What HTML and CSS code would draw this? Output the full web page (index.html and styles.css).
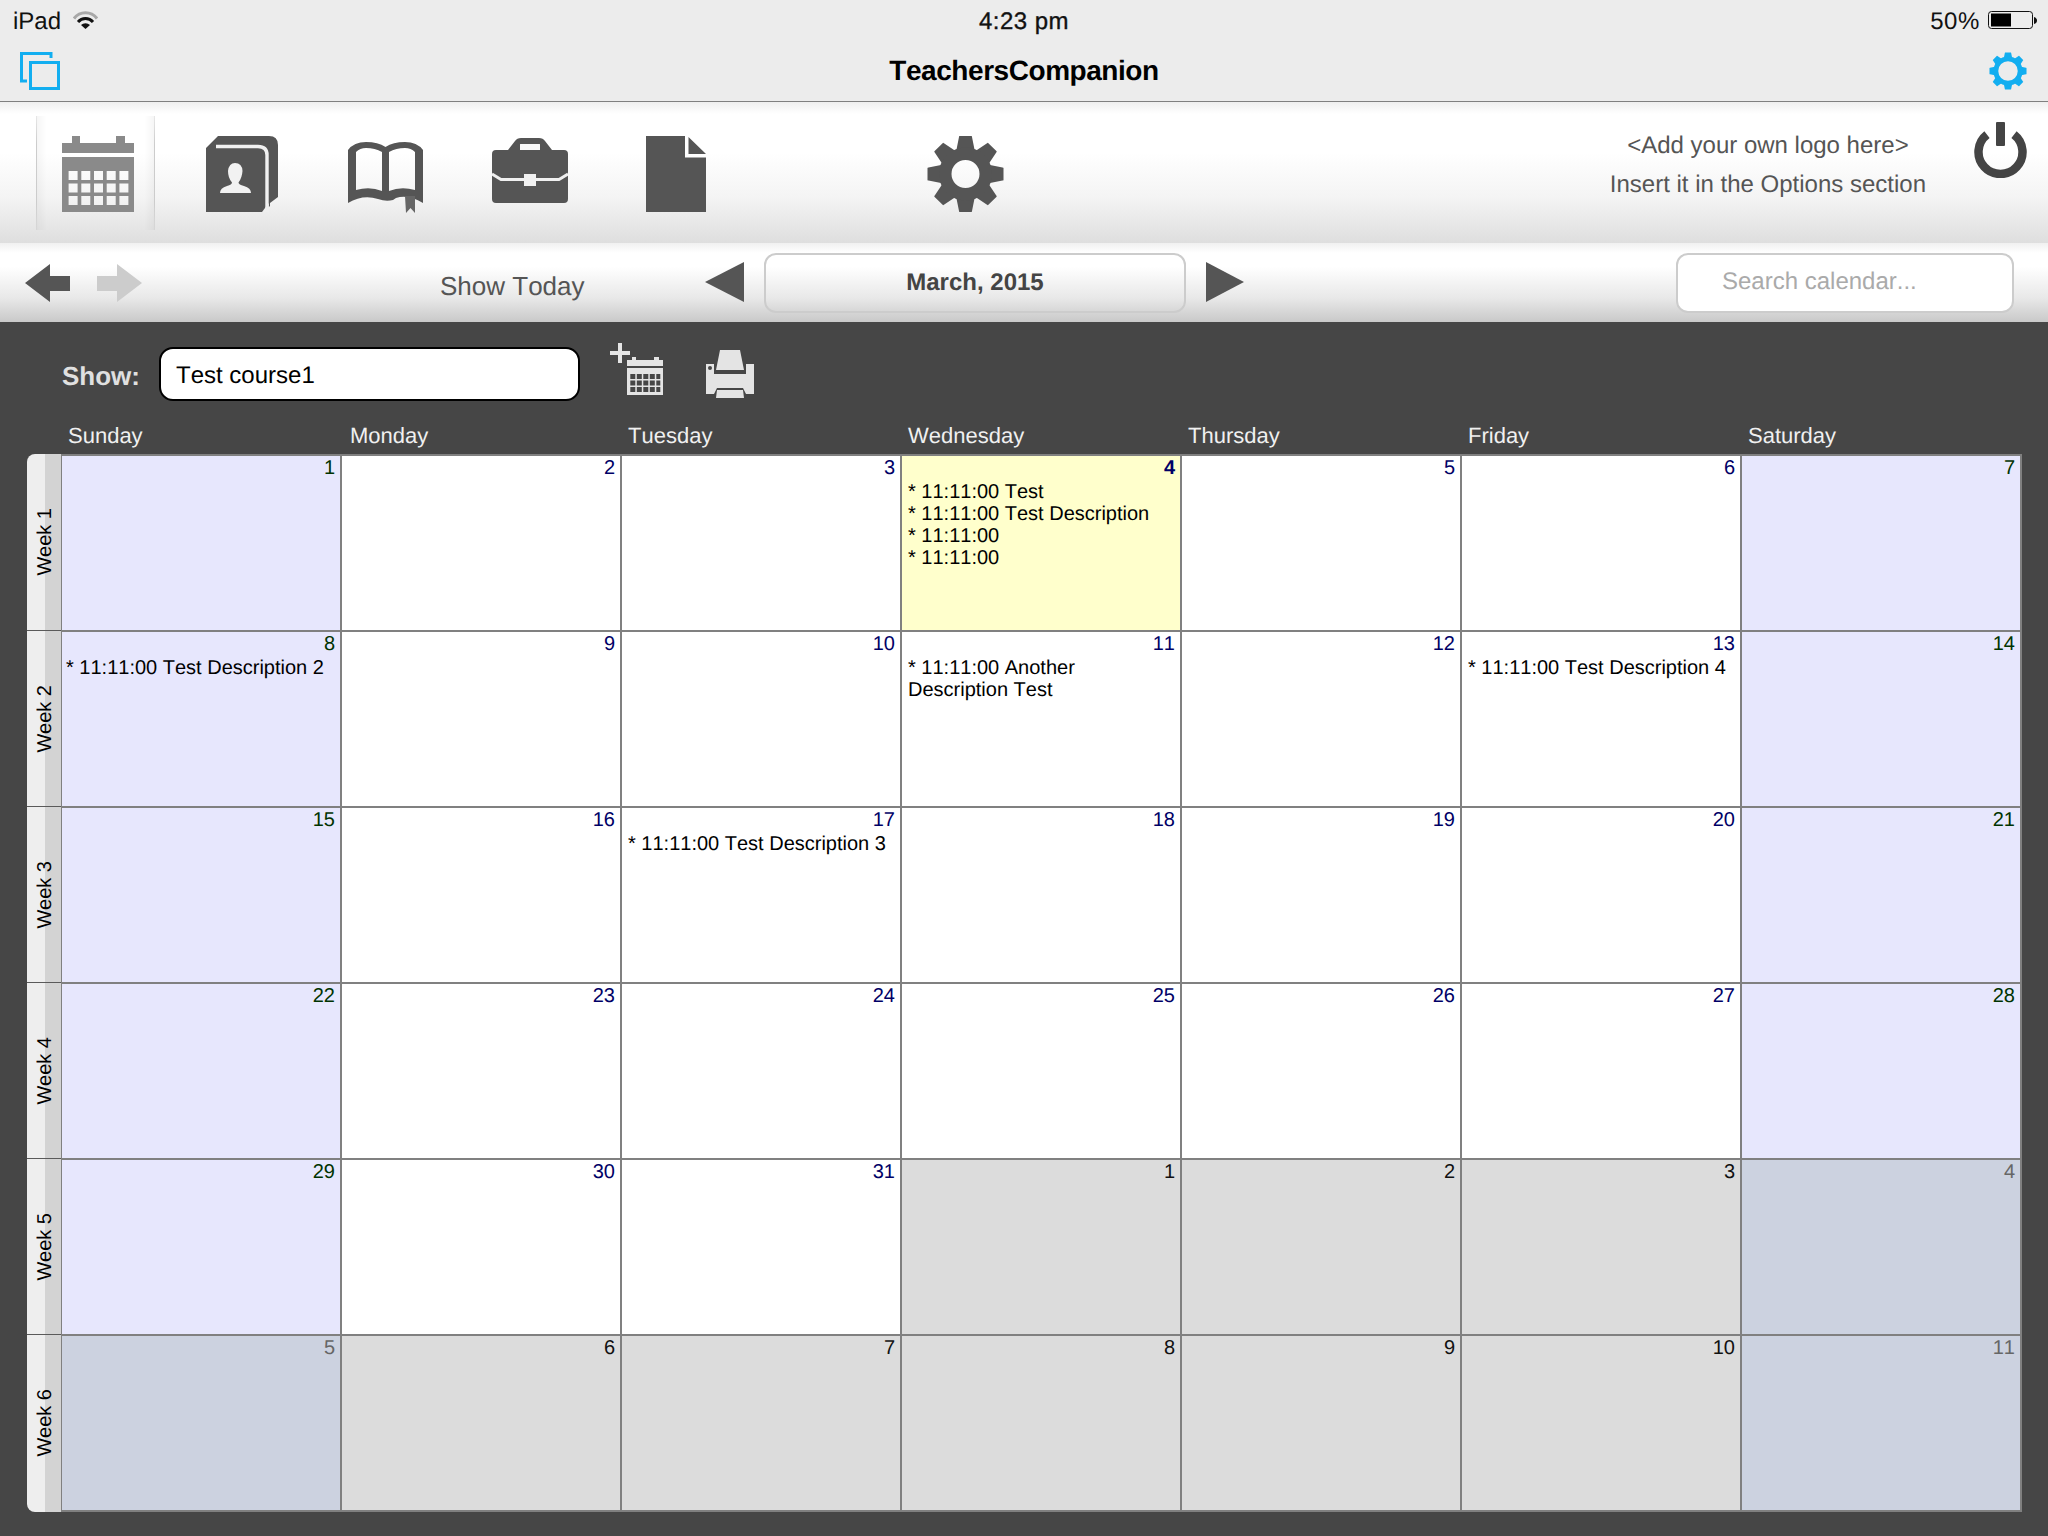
FILE: index.html
```html
<!DOCTYPE html>
<html lang="en">
<head>
<meta charset="utf-8">
<title>TeachersCompanion</title>
<link rel="stylesheet" href="styles.css">
</head>
<body>
<svg class="defs" width="0" height="0">
  <defs>
    <path id="gear-tooth" d="M-6 -38Q-6.500 -38 -6.500 -37L-9.500 -22H9.500L6.500 -37Q6.500 -38 6 -38Z"/>
    <g id="gear-teeth">
      <use href="#gear-tooth"/>
      <use href="#gear-tooth" transform="rotate(45)"/>
      <use href="#gear-tooth" transform="rotate(90)"/>
      <use href="#gear-tooth" transform="rotate(135)"/>
      <use href="#gear-tooth" transform="rotate(180)"/>
      <use href="#gear-tooth" transform="rotate(225)"/>
      <use href="#gear-tooth" transform="rotate(270)"/>
      <use href="#gear-tooth" transform="rotate(315)"/>
    </g>
  </defs>
</svg>
<header class="top">
  <div class="status">
    <div class="status-left">
      <span>iPad</span>
      <svg class="wifi" width="25" height="18" viewBox="0 0 25 18">
        <path d="M1 7.500A14.500 14.500 0 0 1 24 7.500" fill="none" stroke="#a8a8a8" stroke-width="3"/>
        <path d="M5 11A10 10 0 0 1 20 11" fill="none" stroke="#111" stroke-width="3"/>
        <path d="M8 14A6.500 6.500 0 0 1 17 14L12.500 18Z" fill="#111"/>
      </svg>
    </div>
    <div class="clock"><span>4:23 pm</span></div>
    <div class="status-right">
      <span class="pct">50%</span>
      <svg class="battery" width="49" height="18" viewBox="0 0 49 18">
        <rect x="0.500" y="0.500" width="44" height="17" rx="3" fill="none" stroke="#111" stroke-width="1"/>
        <rect x="3" y="2.500" width="20" height="13" fill="#000"/>
        <path d="M46 6Q49 7 49 9.500Q49 12 46 13Z" fill="#111"/>
      </svg>
    </div>
  </div>
  <div class="nav">
    <svg class="nav-copy" width="40" height="38" viewBox="0 0 40 38">
      <path d="M31 6V1.500H1.500V29H7" fill="none" stroke="#12aef0" stroke-width="3"/>
      <rect x="10.500" y="10.500" width="28" height="26" fill="none" stroke="#12aef0" stroke-width="3"/>
    </svg>
    <div class="title">TeachersCompanion</div>
    <svg class="nav-gear" width="38" height="38" viewBox="-39 -39 78 78">
      <use href="#gear-teeth" fill="#12aef0"/>
      <circle r="25" fill="none" stroke="#12aef0" stroke-width="10"/>
    </svg>
  </div>
</header>

<nav class="toolbar">
  <div class="tab">
    <svg width="72" height="76" viewBox="0 0 72 76">
      <path fill="#8a8a8a" fill-rule="evenodd" d="M10 0h8v7h36v-7h9v7h9v10H0V7h10ZM0 21h72v55H0ZM6.600 35v9h9v-9ZM19.300 35v9h9v-9ZM32 35v9h9v-9ZM44.700 35v9h9v-9ZM57.400 35v9h9v-9ZM6.600 47.500v9h9v-9ZM19.300 47.500v9h9v-9ZM32 47.500v9h9v-9ZM44.700 47.500v9h9v-9ZM57.400 47.500v9h9v-9ZM6.600 60v9h9v-9ZM19.300 60v9h9v-9ZM32 60v9h9v-9ZM44.700 60v9h9v-9ZM57.400 60v9h9v-9Z"/>
    </svg>
  </div>
  <svg class="tool tool-contact" width="73" height="76" viewBox="0 0 73 76">
    <path fill="#555" d="M0 12L12 0H63Q72 0 72 9V61L64 67V70L57 76H0Z"/>
    <path d="M10 10.500H52Q61 10.500 61 19V72" fill="none" stroke="#f1f1f1" stroke-width="3.400"/>
    <path d="M62.800 67V76H56Z" fill="#efefef"/>
    <path fill="#f2f2f2" d="M14 57Q14 52 21 50Q26 48.500 26 46.500Q22 42 22 35Q23 27 29 27Q36 27 36.500 35Q36 42 32.500 46.500Q32.500 48.500 38 50Q45 52 45 57Z"/>
  </svg>
  <svg class="tool tool-book" width="75" height="71" viewBox="0 0 75 71">
    <path fill="#555" fill-rule="evenodd" d="M0 8Q6 0 18 0Q30 0 37.500 5Q45 0 57 0Q69 0 75 8V61Q60 52 48 56L45 58Q38 60 30 57Q15 52 0 61ZM8 48Q22 44 34 49V10Q27 6 18 6Q12 6 8 10ZM41 49Q53 44 67 48V10Q63 6 57 6Q48 6 41 10Z"/>
    <path fill="#666" d="M57 54H67V71L62.500 66L58 71Z"/>
  </svg>
  <svg class="tool tool-case" width="76" height="65" viewBox="0 0 76 65">
    <path fill="#555" d="M16 12L23 3Q25 0 29 0H47Q51 0 53 3L60 12H72Q76 12 76 16V61Q76 65 72 65H4Q0 65 0 61V16Q0 12 4 12ZM28 12H48V7Q48 6 47 6H29Q28 6 28 7Z"/>
    <path d="M0 36L9 41.500H67L76 36" fill="none" stroke="#f0f0f0" stroke-width="3"/>
    <rect x="32" y="36" width="12" height="12" fill="#f0f0f0"/>
    <path d="M28 12V7Q28 6 29 6H47Q48 6 48 7V12Z" fill="#f8f8f8"/>
  </svg>
  <svg class="tool tool-file" width="60" height="76" viewBox="0 0 60 76">
    <path fill="#555" d="M0 0H39V21.500H60V76H0ZM42.500 1L60 18H42.500Z"/>
  </svg>
  <svg class="tool tool-gear" width="77" height="76" viewBox="-38.500 -38 77 76">
    <use href="#gear-teeth" fill="#555"/>
    <circle r="20.250" fill="none" stroke="#555" stroke-width="12.500"/>
  </svg>
  <div class="logo-note">
    <div>&lt;Add your own logo here&gt;</div>
    <div>Insert it in the Options section</div>
  </div>
  <svg class="tool-power" width="53" height="56" viewBox="0 0 53 56">
    <path d="M13 12.600A22 22 0 1 0 40 12.600" fill="none" stroke="#444" stroke-width="8.500"/>
    <rect x="22" y="0" width="9" height="24" rx="1" fill="#444"/>
  </svg>
</nav>

<div class="datebar">
  <svg class="arrow" width="45" height="38" viewBox="0 0 45 38"><path fill="#555" d="M0 19L25 0V12H45V27H25V38Z"/></svg>
  <svg class="arrow arrow-next" width="45" height="38" viewBox="0 0 45 38"><path fill="#ccc" d="M45 19L20 0V12H0V27H20V38Z"/></svg>
  <div class="show-today">Show Today</div>
  <svg class="tri tri-prev" width="39" height="40" viewBox="0 0 39 40"><path fill="#555" d="M0 20L39 0V40Z"/></svg>
  <div class="month">March, 2015</div>
  <svg class="tri tri-next" width="38" height="40" viewBox="0 0 38 40"><path fill="#555" d="M38 20L0 0V40Z"/></svg>
  <div class="search">Search calendar...</div>
</div>

<main class="board">
  <div class="filter">
    <div class="filter-label">Show:</div>
    <div class="filter-input">Test course1</div>
    <svg class="add-event" width="53" height="52" viewBox="0 0 53 52">
      <path fill="#e4e4e4" d="M8 0h4v8h8v4h-8v8H8v-8H0V8h8Z"/>
      <path fill="#e4e4e4" fill-rule="evenodd" d="M22 14h4v3h18v-3h5v3h4v6H17v-6h5ZM17 25h36v27H17ZM20.300 31v5h5v-5ZM26.800 31v5h5v-5ZM33.300 31v5h5v-5ZM39.800 31v5h5v-5ZM46.300 31v5h4v-5ZM20.300 37.500v5h5v-5ZM26.800 37.500v5h5v-5ZM33.300 37.500v5h5v-5ZM39.800 37.500v5h5v-5ZM46.300 37.500v5h4v-5ZM20.300 44v5h5v-5ZM26.800 44v5h5v-5ZM33.300 44v5h5v-5ZM39.800 44v5h5v-5ZM46.300 44v5h4v-5Z"/>
    </svg>
    <svg class="print" width="48" height="48" viewBox="0 0 48 48">
      <path fill="#e4e4e4" fill-rule="evenodd" d="M14 0H34L38 20H10ZM0 14H8V24H40V14H48V44H40L37 38H11L8 44H0ZM2 18a2 2 0 1 0 4 0a2 2 0 1 0 -4 0ZM11 40H37L38 48H10Z"/>
    </svg>
  </div>
  <div class="days">
    <div>Sunday</div><div class="days-shift">Monday</div><div>Tuesday</div><div>Wednesday</div><div>Thursday</div><div>Friday</div><div>Saturday</div>
  </div>
  <div class="calendar">
    <div class="rail">
      <div class="rail-row"><span>Week 1</span></div>
      <div class="rail-row"><span>Week 2</span></div>
      <div class="rail-row"><span>Week 3</span></div>
      <div class="rail-row"><span>Week 4</span></div>
      <div class="rail-row"><span>Week 5</span></div>
      <div class="rail-row"><span>Week 6</span></div>
    </div>
    <div class="grid">
      <div class="cell wk"><div class="num">1</div></div>
      <div class="cell"><div class="num">2</div></div>
      <div class="cell"><div class="num">3</div></div>
      <div class="cell today"><div class="num">4</div><div class="ev">* 11:11:00 Test</div><div class="ev">* 11:11:00 Test Description</div><div class="ev">* 11:11:00</div><div class="ev">* 11:11:00</div></div>
      <div class="cell"><div class="num">5</div></div>
      <div class="cell"><div class="num">6</div></div>
      <div class="cell wk"><div class="num">7</div></div>

      <div class="cell wk"><div class="num">8</div><div class="ev">* 11:11:00 Test Description 2</div></div>
      <div class="cell"><div class="num">9</div></div>
      <div class="cell"><div class="num">10</div></div>
      <div class="cell"><div class="num">11</div><div class="ev">* 11:11:00 Another Description Test</div></div>
      <div class="cell"><div class="num">12</div></div>
      <div class="cell"><div class="num">13</div><div class="ev">* 11:11:00 Test Description 4</div></div>
      <div class="cell wk"><div class="num">14</div></div>

      <div class="cell wk"><div class="num">15</div></div>
      <div class="cell"><div class="num">16</div></div>
      <div class="cell"><div class="num">17</div><div class="ev">* 11:11:00 Test Description 3</div></div>
      <div class="cell"><div class="num">18</div></div>
      <div class="cell"><div class="num">19</div></div>
      <div class="cell"><div class="num">20</div></div>
      <div class="cell wk"><div class="num">21</div></div>

      <div class="cell wk"><div class="num">22</div></div>
      <div class="cell"><div class="num">23</div></div>
      <div class="cell"><div class="num">24</div></div>
      <div class="cell"><div class="num">25</div></div>
      <div class="cell"><div class="num">26</div></div>
      <div class="cell"><div class="num">27</div></div>
      <div class="cell wk"><div class="num">28</div></div>

      <div class="cell wk"><div class="num">29</div></div>
      <div class="cell"><div class="num">30</div></div>
      <div class="cell"><div class="num">31</div></div>
      <div class="cell out"><div class="num">1</div></div>
      <div class="cell out"><div class="num">2</div></div>
      <div class="cell out"><div class="num">3</div></div>
      <div class="cell out-wk"><div class="num">4</div></div>

      <div class="cell out-wk"><div class="num">5</div></div>
      <div class="cell out"><div class="num">6</div></div>
      <div class="cell out"><div class="num">7</div></div>
      <div class="cell out"><div class="num">8</div></div>
      <div class="cell out"><div class="num">9</div></div>
      <div class="cell out"><div class="num">10</div></div>
      <div class="cell out-wk"><div class="num">11</div></div>
    </div>
  </div>
</main>
</body>
</html>
```
FILE: styles.css
```css
* { box-sizing: border-box; }
html, body { margin: 0; padding: 0; }
body {
  width: 2048px;
  height: 1536px;
  overflow: hidden;
  display: flex;
  flex-direction: column;
  font-family: "Liberation Sans", Arial, sans-serif;
  text-rendering: geometricPrecision;
  font-kerning: none;
  background: #464646;
}
.defs { display: block; height: 0; }
svg { display: block; flex: none; }

/* iOS chrome */
.top { background: #ececec; border-bottom: 1px solid #808080; height: 102px; flex: none; }
.status {
  height: 40px;
  padding: 0 11px 0 13px;
  display: grid;
  grid-template-columns: 1fr auto 1fr;
  align-items: center;
  font-size: 24px;
  color: #111;
}
.status span { padding-top: 4px; }
.status-left { display: flex; align-items: center; gap: 12px; }
.status-right { display: flex; align-items: center; justify-content: flex-end; gap: 8px; }
.pct { letter-spacing: 0.6px; }
.clock { margin-left: -2px; letter-spacing: 0.5px; -webkit-text-stroke: 0.35px #111; }
.clock span { display: block; }
.nav {
  height: 61px;
  padding: 12px 20px 0;
  display: grid;
  grid-template-columns: 1fr auto 1fr;
  align-items: start;
}
.title { font-size: 28px; font-weight: 700; color: #000; line-height: 38px; letter-spacing: -0.45px; }
.nav-gear { justify-self: end; margin-right: 1px; }

/* icon toolbar */
.toolbar {
  height: 141px;
  flex: none;
  padding: 14px 21px 0 36px;
  display: flex;
  align-items: flex-start;
  background: linear-gradient(#efefef 0, #fff 12px, #fff 36%, #f4f4f4 68%, #dedede 100%);
}
.tab {
  width: 119px;
  height: 114px;
  padding: 20px 0 0 25px;
  border-left: 1px solid #d8d8d8;
  border-right: 1px solid #d8d8d8;
  border-image: linear-gradient(rgba(200,200,200,.3), #ccc 25%, #ccc 75%, rgba(200,200,200,.3)) 1;
  background: linear-gradient(90deg, rgba(0,0,0,.04), rgba(0,0,0,0) 8%, rgba(0,0,0,0) 92%, rgba(0,0,0,.04));
}
.tool-contact { margin: 20px 0 0 51px; }
.tool-book { margin: 26px 0 0 69px; }
.tool-case { margin: 22px 0 0 69px; }
.tool-file { margin: 20px 0 0 78px; }
.tool-gear { margin: 20px 0 0 221px; }
.logo-note {
  margin: 10px 0 0 auto;
  font-size: 24px;
  line-height: 39px;
  color: #555;
  text-align: center;
}
.tool-power { margin: 6px 0 0 48px; }

/* date bar */
.datebar {
  height: 79px;
  flex: none;
  padding: 10px 34px 0 25px;
  display: flex;
  align-items: flex-start;
  background: linear-gradient(#f0f0f0 0, #fff 10px, #fff 30%, #e8e8e8 70%, #c9c9c9 100%);
}
.arrow { margin-top: 11px; }
.arrow-next { margin-left: 27px; }
.show-today { margin: 18px 0 0 298px; width: 145px; font-size: 26px; line-height: 30px; color: #555; white-space: nowrap; }
.tri { margin-top: 9px; }
.tri-prev { margin-left: 120px; }
.month {
  width: 422px;
  height: 60px;
  margin-left: 20px;
  border: 2px solid #ccc;
  border-radius: 12px;
  text-align: center;
  font-size: 24px;
  font-weight: 700;
  line-height: 55px;
  color: #444;
}
.tri-next { margin-left: 20px; }
.search {
  width: 338px;
  height: 60px;
  margin-left: auto;
  padding-left: 44px;
  border: 2px solid #ccc;
  border-radius: 12px;
  background: #fff;
  font-size: 24px;
  line-height: 53px;
  color: #aaa;
}

/* dark board */
.board { flex: 1; background: #464646; }
.filter { height: 101px; padding: 21px 0 0 62px; display: flex; align-items: flex-start; }
.filter-label { margin-top: 14px; width: 97px; font-size: 26px; font-weight: 700; line-height: 38px; color: #e0e0e0; }
.filter-input {
  width: 421px;
  height: 54px;
  margin-top: 4px;
  padding-left: 15px;
  border: 2px solid #000;
  border-radius: 14px;
  background: #fff;
  font-size: 24px;
  line-height: 54px;
  color: #000;
}
.add-event { margin-left: 30px; }
.print { margin: 7px 0 0 43px; }

.days {
  height: 31px;
  padding: 1px 0 0 68px;
  display: grid;
  grid-template-columns: repeat(7, 280px);
  font-size: 22px;
  line-height: 24px;
  color: #f0f0f0;
}
.days-shift { padding-left: 2px; }

.calendar { margin-left: 27px; display: flex; align-items: stretch; }
.rail {
  width: 34px;
  flex: none;
  border-radius: 8px 0 0 8px;
  overflow: hidden;
  background: linear-gradient(90deg, #eee 18px, #d3d3d3 18px);
}
.rail-row {
  height: 176px;
  padding-left: 2px;
  display: flex;
  align-items: center;
  justify-content: center;
  border-top: 1px solid #5a5a5a;
  font-size: 20px;
  color: #000;
}
.rail-row:first-child { border-top: 0; }
.rail-row:last-child { height: 178px; padding-bottom: 2px; }
.rail-row span { writing-mode: vertical-rl; transform: rotate(180deg); white-space: nowrap; }

.grid {
  padding: 2px 2px 2px 1px;
  display: grid;
  grid-template-columns: repeat(7, 278px);
  grid-auto-rows: 174px;
  gap: 2px;
  background: #808080;
}
.cell { background: #fff; padding: 1px 5px 0 6px; font-size: 20px; line-height: 22px; color: #000; }
.num { height: 24px; text-align: right; color: #000066; line-height: 23px; }
.wk { background: #e7e7fd; padding-left: 4px; }
.wk .num { color: #003300; }
.today { background: #ffffcc; }
.today .num { font-weight: 700; }
.out { background: #dcdcdc; }
.out .num { color: #111; }
.out-wk { background: #ccd2e0; }
.out-wk .num { color: #666; }
```
